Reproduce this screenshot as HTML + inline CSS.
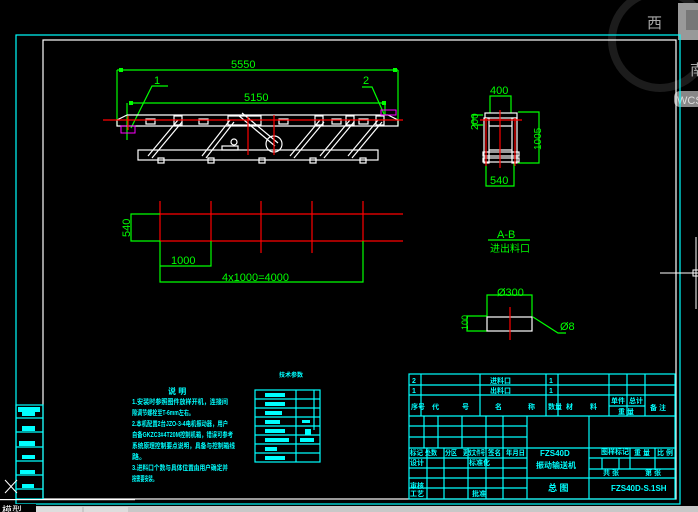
<!DOCTYPE html>
<html><head><meta charset="utf-8"><style>
html,body{margin:0;padding:0;background:#000;width:698px;height:512px;overflow:hidden}
svg{display:block}
text{font-family:"Liberation Sans","Noto Sans CJK SC",sans-serif}
</style></head><body>
<svg width="698" height="512" viewBox="0 0 698 512" xmlns="http://www.w3.org/2000/svg">
<rect width="698" height="512" fill="#000"/>
<!-- viewcube -->
<circle cx="660" cy="40" r="48" fill="none" stroke="#1c1c1c" stroke-width="8"/>
<rect x="678" y="3" width="22" height="37" fill="#999"/>
<rect x="686" y="10" width="12" height="20" fill="#777"/>
<text x="647" y="28" font-size="15" fill="#aaa">西</text>
<text x="690" y="75" font-size="15" fill="#aaa">南</text>
<rect x="674" y="91" width="30" height="16" rx="6" fill="#888"/>
<text x="677" y="104" font-size="11" fill="#ddd">WCS</text>
<!-- frames -->
<rect x="16" y="35" width="664" height="469" fill="none" stroke="#0ff" stroke-width="1.2"/>
<rect x="43" y="40" width="633" height="459" fill="none" stroke="#fff" stroke-width="1.2"/>
<!-- crosshair right -->
<line x1="660" y1="273" x2="698" y2="273" stroke="#fff"/>
<line x1="696" y1="237" x2="696" y2="309" stroke="#fff"/>
<rect x="693" y="270" width="6" height="6" fill="none" stroke="#fff"/>
<!-- main elevation -->
<g stroke="#0f0" fill="none" stroke-width="1.2">
<line x1="117" y1="70" x2="398" y2="70"/><line x1="117" y1="70" x2="117" y2="126"/><line x1="398" y1="70" x2="398" y2="126"/>
<line x1="131" y1="103" x2="385" y2="103"/><line x1="127" y1="103" x2="127" y2="140"/><line x1="385" y1="103" x2="385" y2="115"/>
<polyline points="168,86 152,86 131,128"/><polyline points="362,87 372,87 384,114"/>
</g>
<g fill="#0f0"><rect x="119" y="68" width="4" height="4"/><rect x="393" y="68" width="4" height="4"/><rect x="129" y="101" width="4" height="4"/><rect x="382" y="101" width="4" height="4"/></g>
<g fill="#0f0" font-size="11"><text x="231" y="68">5550</text><text x="244" y="101">5150</text><text x="154" y="84">1</text><text x="363" y="84">2</text></g>
<g stroke="#fff" fill="none" stroke-width="1.2">
<polyline points="127,115 388,115 398,120 398,126 117,126 117,120 127,115"/>
<rect x="138" y="150" width="240" height="10"/>
<line x1="148" y1="156" x2="178" y2="120"/><line x1="152" y1="158" x2="182" y2="122"/>
<line x1="202" y1="156" x2="230" y2="120"/><line x1="206" y1="158" x2="234" y2="122"/>
<line x1="290" y1="156" x2="320" y2="120"/><line x1="294" y1="158" x2="324" y2="122"/>
<line x1="320" y1="156" x2="350" y2="120"/><line x1="324" y1="158" x2="354" y2="122"/>
<line x1="348" y1="156" x2="378" y2="120"/><line x1="352" y1="158" x2="382" y2="122"/>
<line x1="238" y1="115" x2="275" y2="146"/><line x1="242" y1="113" x2="278" y2="143"/>
<circle cx="274" cy="144" r="8"/><rect x="222" y="146" width="16" height="4"/><circle cx="234" cy="142" r="3"/>
<rect x="146" y="119" width="9" height="5"/><rect x="199" y="119" width="9" height="5"/><rect x="279" y="119" width="9" height="5"/><rect x="332" y="119" width="9" height="5"/><rect x="359" y="119" width="9" height="5"/>
<rect x="174" y="116" width="8" height="9"/><rect x="315" y="116" width="8" height="9"/><rect x="346" y="116" width="8" height="9"/><rect x="376" y="116" width="8" height="9"/><rect x="228" y="116" width="33" height="9"/>
<rect x="158" y="158" width="6" height="5"/><rect x="208" y="158" width="6" height="5"/><rect x="259" y="158" width="6" height="5"/><rect x="310" y="158" width="6" height="5"/><rect x="360" y="158" width="6" height="5"/>
</g>
<g stroke="#f0f" fill="none"><rect x="121" y="126" width="14" height="7"/><rect x="381" y="110" width="15" height="5"/></g>
<g stroke="#f00" stroke-width="1.2"><line x1="103" y1="120" x2="403" y2="120"/><line x1="274" y1="115" x2="274" y2="155"/><line x1="248" y1="117" x2="248" y2="155"/><line x1="128" y1="116" x2="128" y2="130"/></g>
<!-- plan -->
<g stroke="#f00" stroke-width="1.2">
<line x1="160" y1="214" x2="403" y2="214"/><line x1="160" y1="241" x2="403" y2="241"/>
<line x1="160" y1="201" x2="160" y2="241"/><line x1="211" y1="201" x2="211" y2="241"/><line x1="261" y1="201" x2="261" y2="253"/><line x1="312" y1="201" x2="312" y2="253"/><line x1="363" y1="201" x2="363" y2="241"/>
</g>
<g stroke="#0f0" fill="none" stroke-width="1.2">
<polyline points="160,214 131,214 131,241 160,241"/>
<polyline points="160,241 160,282 363,282 363,241"/>
<polyline points="160,266 211,266 211,241"/>
</g>
<g fill="#0f0" font-size="11"><text x="171" y="264">1000</text><text x="222" y="281">4x1000=4000</text>
<text transform="translate(130,237) rotate(-90)">540</text></g>
<!-- side view -->
<g stroke="#0f0" fill="none" stroke-width="1.2">
<polyline points="490,113 490,96 511,96 511,113"/><polyline points="486,163 486,186 514,186 514,163"/>
<polyline points="518,112 539,112 539,163 518,163"/><polyline points="483,115 473,115 473,125 483,125"/>
<line x1="488" y1="240" x2="530" y2="240"/>
<polyline points="487,317 487,295 532,295 532,317"/><polyline points="487,316 467,316 467,331 487,331"/>
<polyline points="533,317 558,333 566,333"/>
</g>
<g fill="#0f0" font-size="11"><text x="490" y="94">400</text><text x="490" y="184">540</text><text x="497" y="238">A-B</text>
<text x="490" y="252" font-size="10">进出料口</text><text x="497" y="296">Ø300</text><text x="560" y="330">Ø8</text>
<text transform="translate(478,130) rotate(-90)" font-size="10">200</text><text transform="translate(541,150) rotate(-90)" font-size="10">1005</text><text transform="translate(468,330) rotate(-90)" font-size="9">100</text></g>
<g stroke="#fff" fill="none" stroke-width="1.2">
<rect x="485" y="113" width="32" height="5"/><rect x="484" y="118" width="5" height="45"/><rect x="512" y="118" width="5" height="45"/>
<line x1="489" y1="126" x2="512" y2="126"/><line x1="489" y1="150" x2="512" y2="150"/><rect x="483" y="152" width="36" height="4"/><rect x="483" y="158" width="36" height="4"/>
<rect x="487" y="317" width="45" height="14"/>
</g>
<g stroke="#f00" stroke-width="1.2"><line x1="500" y1="110" x2="500" y2="168"/><line x1="480" y1="120" x2="522" y2="120"/><line x1="510" y1="307" x2="510" y2="340"/><line x1="486" y1="118" x2="486" y2="166"/><line x1="515" y1="118" x2="515" y2="166"/></g>
<!-- notes -->
<g fill="#0ff" font-size="7" font-weight="bold">
<text x="168" y="394" font-size="8">说 明</text>
<text x="132" y="404" textLength="96" lengthAdjust="spacingAndGlyphs">1.安装时参照图件放样开机，连接间</text>
<text x="132" y="415" textLength="62" lengthAdjust="spacingAndGlyphs">隙调节螺栓至T-6mm左右。</text>
<text x="132" y="426" textLength="96" lengthAdjust="spacingAndGlyphs">2.本机配置2台JZO-3-4电机振动器，用户</text>
<text x="132" y="437" textLength="101" lengthAdjust="spacingAndGlyphs">自备GKZC3#4T20M控制机箱，错误可参考</text>
<text x="132" y="448" textLength="103" lengthAdjust="spacingAndGlyphs">系统原理控制要点说明，具备与控制箱线</text>
<text x="132" y="459">路。</text>
<text x="132" y="470" textLength="96" lengthAdjust="spacingAndGlyphs">3.进料口个数与具体位置由用户确定并</text>
<text x="132" y="481" textLength="25" lengthAdjust="spacingAndGlyphs">按需要安装。</text>
<text x="279" y="377" font-size="6">技术参数</text>
</g>
<g stroke="#0ff" fill="none" stroke-width="1.2">
<rect x="255" y="390" width="65" height="72"/>
<line x1="296" y1="390" x2="296" y2="462"/><line x1="314" y1="390" x2="314" y2="430"/>
<line x1="255" y1="399" x2="320" y2="399"/><line x1="255" y1="408" x2="320" y2="408"/><line x1="255" y1="417" x2="320" y2="417"/><line x1="255" y1="426" x2="320" y2="426"/><line x1="255" y1="435" x2="320" y2="435"/><line x1="255" y1="444" x2="320" y2="444"/><line x1="255" y1="453" x2="320" y2="453"/>
</g>
<g fill="#0ff"><rect x="265" y="393" width="20" height="4"/><rect x="265" y="402" width="20" height="4"/><rect x="265" y="411" width="17" height="4"/><rect x="265" y="420" width="15" height="4"/><rect x="265" y="429" width="20" height="4"/><rect x="265" y="438" width="24" height="4"/><rect x="265" y="447" width="12" height="4"/><rect x="265" y="456" width="20" height="4"/>
<rect x="305" y="429" width="6" height="6"/><rect x="300" y="438" width="14" height="4"/><rect x="302" y="420" width="8" height="3"/></g>
<!-- left strip -->
<g stroke="#0ff" fill="none" stroke-width="1.2">
<rect x="16" y="405" width="27" height="94"/>
<line x1="16" y1="418" x2="43" y2="418"/><line x1="16" y1="432" x2="43" y2="432"/><line x1="16" y1="447" x2="43" y2="447"/><line x1="16" y1="461" x2="43" y2="461"/><line x1="16" y1="475" x2="43" y2="475"/><line x1="16" y1="489" x2="43" y2="489"/>
</g>
<g fill="#0ff"><rect x="18" y="407" width="22" height="5"/><rect x="22" y="412" width="13" height="4"/><rect x="22" y="426" width="13" height="5"/><rect x="19" y="441" width="16" height="5"/><rect x="22" y="455" width="13" height="4"/><rect x="20" y="470" width="15" height="4"/><rect x="22" y="484" width="12" height="4"/></g>
<g stroke="#fff"><line x1="5" y1="480" x2="17" y2="493"/><line x1="5" y1="493" x2="17" y2="480"/></g>
<!-- title block -->
<g stroke="#0ff" fill="none" stroke-width="1.2">
<rect x="409" y="374" width="266" height="125"/>
<line x1="409" y1="385" x2="675" y2="385"/><line x1="409" y1="395" x2="675" y2="395"/><line x1="409" y1="416" x2="675" y2="416"/>
<line x1="421" y1="374" x2="421" y2="416"/><line x1="480" y1="374" x2="480" y2="416"/><line x1="546" y1="374" x2="546" y2="416"/><line x1="558" y1="374" x2="558" y2="416"/><line x1="609" y1="374" x2="609" y2="416"/><line x1="627" y1="374" x2="627" y2="416"/><line x1="645" y1="374" x2="645" y2="416"/>
<line x1="609" y1="406" x2="645" y2="406"/>
<line x1="409" y1="426" x2="527" y2="426"/><line x1="409" y1="437" x2="527" y2="437"/><line x1="409" y1="448" x2="675" y2="448"/><line x1="409" y1="458" x2="527" y2="458"/><line x1="409" y1="468" x2="527" y2="468"/><line x1="409" y1="478" x2="527" y2="478"/><line x1="409" y1="488" x2="527" y2="488"/>
<line x1="424" y1="416" x2="424" y2="448"/><line x1="438" y1="416" x2="438" y2="448"/><line x1="462" y1="416" x2="462" y2="448"/><line x1="486" y1="416" x2="486" y2="448"/><line x1="503" y1="416" x2="503" y2="448"/>
<line x1="427" y1="448" x2="427" y2="499"/><line x1="444" y1="448" x2="444" y2="499"/><line x1="468" y1="448" x2="468" y2="499"/><line x1="486" y1="448" x2="486" y2="499"/><line x1="503" y1="448" x2="503" y2="499"/>
<line x1="527" y1="416" x2="527" y2="499"/><line x1="589" y1="416" x2="589" y2="499"/>
<line x1="527" y1="478" x2="675" y2="478"/>
<line x1="589" y1="458" x2="675" y2="458"/><line x1="589" y1="469" x2="675" y2="469"/>
<line x1="630" y1="448" x2="630" y2="469"/><line x1="655" y1="448" x2="655" y2="469"/><line x1="602" y1="458" x2="602" y2="469"/><line x1="619" y1="458" x2="619" y2="469"/>
</g>
<g fill="#0ff" font-size="7" font-weight="bold">
<text x="412" y="383">2</text><text x="412" y="393">1</text><text x="490" y="383">进料口</text><text x="490" y="393">出料口</text><text x="549" y="383">1</text><text x="549" y="393">1</text>
<text x="411" y="409">序号</text><text x="432" y="409">代</text><text x="462" y="409">号</text><text x="495" y="409">名</text><text x="528" y="409">称</text><text x="548" y="409">数量</text><text x="566" y="409">材</text><text x="590" y="409">料</text>
<text x="611" y="403">单件</text><text x="629" y="403">总计</text><text x="650" y="410">备 注</text><text x="618" y="414">重 量</text>
<text x="410" y="455" textLength="13" lengthAdjust="spacingAndGlyphs">标记</text><text x="425" y="455" textLength="12" lengthAdjust="spacingAndGlyphs">处数</text><text x="445" y="455" textLength="12" lengthAdjust="spacingAndGlyphs">分区</text><text x="463" y="455" textLength="22" lengthAdjust="spacingAndGlyphs">更改文件号</text><text x="488" y="455" textLength="13" lengthAdjust="spacingAndGlyphs">签名</text><text x="506" y="455" textLength="19" lengthAdjust="spacingAndGlyphs">年月日</text>
<text x="410" y="465">设计</text><text x="469" y="465">标准化</text><text x="410" y="488">审核</text><text x="410" y="496">工艺</text><text x="472" y="496">批准</text>
<text x="540" y="456" font-size="8">FZS40D</text><text x="536" y="468" font-size="8">振动输送机</text><text x="548" y="491" font-size="9">总 图</text>
<text x="601" y="454">图样标记</text><text x="634" y="455">重 量</text><text x="657" y="455">比 例</text><text x="603" y="475">共 张</text><text x="645" y="475">第 张</text>
<text x="611" y="491" font-size="8">FZS40D-S.1SH</text>
</g>
<!-- bottom bar -->
<rect x="0" y="506" width="698" height="6" fill="#c8c8c8"/>
<rect x="0" y="504" width="36" height="8" fill="#000"/>
<text x="2" y="514" font-size="10" fill="#fff">模型</text>
<rect x="36" y="507" width="46" height="5" fill="#ddd"/><rect x="84" y="507" width="44" height="5" fill="#ddd"/>
<rect x="0" y="499" width="135" height="1.2" fill="#fff"/>
</svg>
</body></html>
